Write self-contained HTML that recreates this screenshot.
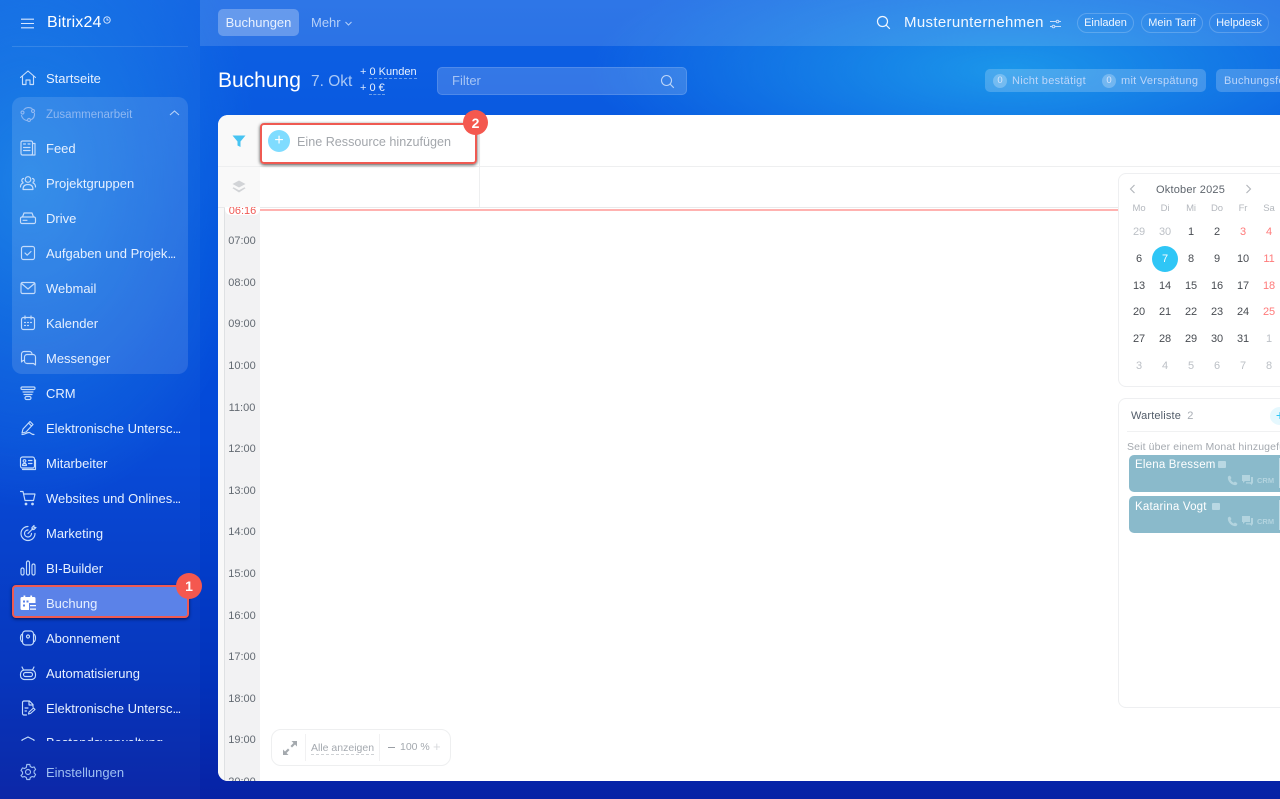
<!DOCTYPE html>
<html lang="de"><head><meta charset="utf-8"><title>Bitrix24 Buchung</title>
<style>
*{box-sizing:border-box;margin:0;padding:0}
html,body{width:1280px;height:799px;overflow:hidden}
body{position:relative;font-family:"Liberation Sans",sans-serif;color:#fff;
background:
radial-gradient(ellipse 420px 130px at 1010px 70px,#1b96ea 0%,rgba(27,150,234,0) 100%),
radial-gradient(ellipse 230px 330px at 30px 180px,#167de6 0%,rgba(22,125,230,0) 100%),
linear-gradient(180deg,#0f62e4 0%,#0350dc 30%,#0348d8 55%,#0232bb 85%,#0722a5 100%)}
.a{position:absolute;white-space:nowrap}
.side{position:absolute;left:0;top:0;width:200px;height:799px;background:rgba(255,255,255,.025)}
.top{position:absolute;left:200px;top:0;width:1080px;height:46px;background:rgba(255,255,255,.13)}
.group{position:absolute;left:12px;top:97px;width:176px;height:277px;border-radius:10px;background:rgba(255,255,255,.12)}
.it{position:absolute;left:46px;margin-top:1px;font-size:13px;line-height:18px;height:18px;color:#e6f0ff;white-space:nowrap}
.it i{font-style:normal;letter-spacing:-1px}
.ic{position:absolute;left:19px;width:18px;height:18px;fill:none;stroke:#c4dcfb;stroke-width:1.15;stroke-linecap:round;stroke-linejoin:round}
.main{position:absolute;left:218px;top:115px;width:1070px;height:666px;background:#fff;border-radius:10px 0 0 10px;overflow:hidden;color:#333}
.pill{position:absolute;top:13px;height:20px;border:1px solid rgba(255,255,255,.2);border-radius:10px;font-size:11px;line-height:18px;text-align:center;color:#f0f7ff}
.cal{position:absolute;font-size:11px;width:26px;text-align:center;line-height:14px;color:#484c52;letter-spacing:-.1px}
.g{color:#bcc0c6}.r{color:#ff7a7a}
.w{font-size:9.5px;color:#b4b8be}
.h{position:absolute;left:6px;width:36px;text-align:center;font-size:11px;line-height:14px;color:#636a72}
.card{position:absolute;left:911px;width:170px;height:37px;background:#8abacb;border-radius:5px;color:#fff}
</style></head><body>
<div class="side"></div><div class="top"></div>
<div class="a" style="left:12px;top:46px;width:176px;height:1px;background:rgba(255,255,255,.13)"></div>

<svg class="ic" style="left:21px;top:17px;width:13px;height:13px;stroke:#d8e8ff;stroke-width:1.1" viewBox="0 0 13 13"><path d="M0 2.200h13M0 6.500h13M0 10.800h13"/></svg>
<div class="a" style="left:47px;top:13px;font-size:16px;line-height:20px;letter-spacing:.15px">Bitrix24</div>
<svg class="a" style="left:103px;top:16px" width="8" height="8" viewBox="0 0 8 8" fill="none" stroke="#e4efff" stroke-width=".9"><circle cx="4" cy="4" r="3.200"/><path d="M4 2.200V4h1.600"/></svg>

<div class="group"></div>
<div class="it" style="top:69px">Startseite</div>
<div class="it" style="top:105px;font-size:11.500px;color:#8fb8f2">Zusammenarbeit</div>
<svg class="a" style="left:169px;top:110px" width="11" height="6" viewBox="0 0 11 6" fill="none" stroke="#b7d2f8" stroke-width="1.100"><path d="M1 5l4.500-4 4.500 4"/></svg>
<div class="it" style="top:139px">Feed</div>
<div class="it" style="top:174px">Projektgruppen</div>
<div class="it" style="top:209px">Drive</div>
<div class="it" style="top:244px">Aufgaben und Projek<i>...</i></div>
<div class="it" style="top:279px">Webmail</div>
<div class="it" style="top:314px">Kalender</div>
<div class="it" style="top:349px">Messenger</div>
<div class="it" style="top:384px">CRM</div>
<div class="it" style="top:419px">Elektronische Untersc<i>...</i></div>
<div class="it" style="top:454px">Mitarbeiter</div>
<div class="it" style="top:489px">Websites und Onlines<i>...</i></div>
<div class="it" style="top:524px">Marketing</div>
<div class="it" style="top:559px">BI-Builder</div>
<div class="a" style="left:12px;top:585px;width:177px;height:33px;background:#5b82e8;border:2px solid #ef5a52;border-radius:4px;box-shadow:0 1px 3px rgba(0,0,30,.7)"></div>
<div class="it" style="top:594px">Buchung</div>
<div class="it" style="top:629px">Abonnement</div>
<div class="it" style="top:664px">Automatisierung</div>
<div class="it" style="top:699px">Elektronische Untersc<i>...</i></div>
<div class="a" style="left:0;top:733px;width:200px;height:8px;overflow:hidden"><div class="it" style="top:0">Bestandsverwaltung</div>
<svg class="ic" style="top:1px" viewBox="0 0 18 18"><path d="M3 6l6-3 6 3v9H3z"/></svg></div>
<div class="it" style="top:763px;color:#9fc0f2">Einstellungen</div>

<svg class="ic" style="top:69px" viewBox="0 0 18 18"><path d="M1.500 8.500L9 2l7.500 6.500M3.500 7v8.500h3.500v-4.500h4v4.500h3.500V7"/></svg>
<svg class="ic" style="top:105px;stroke:#8fb8f2" viewBox="0 0 18 18"><path d="M5 4.500A6.500 6.500 0 0 1 13 3.500M15.500 8.500a6.500 6.500 0 0 1-3 6M8 15.500a6.500 6.500 0 0 1-5.500-5"/><circle cx="3.500" cy="7.500" r="1.500"/><circle cx="14" cy="6" r="1.500"/><circle cx="10" cy="15" r="1.500"/></svg>
<svg class="ic" style="top:139px" viewBox="0 0 18 18"><rect x="2" y="2" width="11.500" height="14" rx="1.500"/><path d="M13.500 4.500H16v11.500h-4M4.500 5h2M9 5h2M4.500 8.500h6.500M4.500 11.500h6.500"/></svg>
<svg class="ic" style="top:174px" viewBox="0 0 18 18"><circle cx="9" cy="5.500" r="2.800"/><path d="M4 15.500c0-3.500 2-5 5-5s5 1.500 5 5zM4.500 4.500a2 2 0 0 0-.500 3.800M1.500 13c0-2 1-3.500 2.500-4M13.500 4.500a2 2 0 0 1 .5 3.800M16.500 13c0-2-1-3.500-2.500-4"/></svg>
<svg class="ic" style="top:209px" viewBox="0 0 18 18"><path d="M3.500 8L5 4h8l1.500 4"/><rect x="1.500" y="8" width="15" height="6.500" rx="1.500"/><path d="M4 11.300h4"/></svg>
<svg class="ic" style="top:244px" viewBox="0 0 18 18"><rect x="2.500" y="2.500" width="13" height="13" rx="2"/><path d="M6 9l2.200 2.200L12 7.500"/></svg>
<svg class="ic" style="top:279px" viewBox="0 0 18 18"><rect x="2" y="3.500" width="14" height="11" rx="1.500"/><path d="M2.500 4.500L9 10l6.500-5.500"/></svg>
<svg class="ic" style="top:314px" viewBox="0 0 18 18"><rect x="2.500" y="3.500" width="13" height="12" rx="2"/><path d="M6 2v3M12 2v3M5.500 8.500h1M8.500 8.500h1M11.500 8.500h1M5.500 11.500h1M8.500 11.500h1"/></svg>
<svg class="ic" style="top:349px" viewBox="0 0 18 18"><path d="M5.500 11.500H4L2.500 13V5a2.500 2.500 0 0 1 2.500-2.500h5.500A2.500 2.500 0 0 1 13 5"/><path d="M8 5.500h6a2.500 2.500 0 0 1 2.500 2.500v8l-2-1.500H8a2.500 2.500 0 0 1-2.500-2.500V8A2.500 2.500 0 0 1 8 5.500z"/></svg>
<svg class="ic" style="top:384px" viewBox="0 0 18 18"><rect x="2" y="3" width="14" height="2.500" rx="1.200"/><path d="M4 8h10M5 10.500h8"/><rect x="6" y="12.500" width="6" height="3" rx="1.500"/></svg>
<svg class="ic" style="top:419px" viewBox="0 0 18 18"><path d="M3 14l1-4 7-7.500 3 3L7 13zM9.500 4l3 3M3 15.500c4 0 4-2 7-2 2 0 1.500 2 5 2"/></svg>
<svg class="ic" style="top:454px" viewBox="0 0 18 18"><rect x="1.500" y="3" width="14" height="11" rx="2"/><path d="M16.500 6v9.500h-13"/><circle cx="5.500" cy="7" r="1.300"/><path d="M3.500 11.500c0-1.500 1-2 2-2s2 .5 2 2zM9.500 6.500h3.500M9.500 9.500h3.500"/></svg>
<svg class="ic" style="top:489px" viewBox="0 0 18 18"><path d="M1.500 2.500h2.500l2 9h8.500l1.500-6.500H4.500"/><circle cx="7" cy="15" r=".8" fill="#c4dcfb"/><circle cx="13.500" cy="15" r=".8" fill="#c4dcfb"/></svg>
<svg class="ic" style="top:524px" viewBox="0 0 18 18"><path d="M9 2.500a7 7 0 1 0 7 7M9 6a3.500 3.500 0 1 0 3.500 3.500M9 9.500l5-5M13 3.500v2h2l2-2h-2v-2z"/></svg>
<svg class="ic" style="top:559px" viewBox="0 0 18 18"><rect x="2" y="9" width="3" height="7" rx="1.500"/><rect x="7.500" y="2" width="3" height="14" rx="1.500"/><rect x="13" y="5" width="3" height="11" rx="1.500"/></svg>
<svg class="ic" style="top:594px;stroke:none;fill:#fff" viewBox="0 0 18 18"><path d="M3 3h1.500V1.500h1.800V3h5V1.500h1.800V3H15a1.500 1.500 0 0 1 1.500 1.500V9H10v7H3a1.500 1.500 0 0 1-1.500-1.500v-10A1.500 1.500 0 0 1 3 3z"/><path d="M11 11h6v1.200h-6zM11 14.500h6v1.200h-6z"/><path fill="#5b82e8" d="M4 6.500h2v2H4zM7.500 6.500h2v2h-2zM4 10.500h2v2H4z"/></svg>
<svg class="ic" style="top:629px" viewBox="0 0 18 18"><rect x="3.500" y="2" width="11" height="14" rx="3"/><path d="M3.500 5C2 5.500 1.500 6.500 1.500 9s.5 3.500 2 4M14.500 5c1.500.5 2 1.500 2 4s-.5 3.500-2 4"/><circle cx="9" cy="7.500" r="1.500"/></svg>
<svg class="ic" style="top:664px" viewBox="0 0 18 18"><rect x="1.500" y="6" width="15" height="9.500" rx="4"/><path d="M4.500 6L3 3M13.500 6L15 3"/><rect x="4.500" y="8.500" width="9" height="4" rx="2"/></svg>
<svg class="ic" style="top:699px" viewBox="0 0 18 18"><path d="M7.500 16H5a1.500 1.500 0 0 1-1.500-1.500v-11A1.500 1.500 0 0 1 5 2h5.500L14 5.500V8M10 2v4h4M6 9h3M6 12h1.500M9.500 15l.5-2 4.500-4 1.500 1.500-4.500 4z"/></svg>
<svg class="ic" style="top:763px;stroke:#9fc0f2" viewBox="0 0 18 18"><circle cx="9" cy="9" r="2.500"/><path d="M7.500 2h3l.5 2 1.800 1 2-.6 1.500 2.600-1.500 1.500v2l1.500 1.500-1.500 2.600-2-.6-1.800 1-.5 2h-3l-.5-2-1.800-1-2 .6L1.700 13l1.500-1.500v-2L1.700 8l1.500-2.600 2 .6 1.800-1z" transform="translate(.3 -.5)"/></svg>

<!-- Top bar -->
<div class="a" style="left:218px;top:9px;width:81px;height:27px;border-radius:5px;background:rgba(255,255,255,.27);font-size:13px;line-height:28px;text-align:center;color:#e8f1ff">Buchungen</div>
<div class="a" style="left:311px;top:15px;font-size:13px;line-height:16px;color:#b5d0f8">Mehr</div>
<svg class="a" style="left:345px;top:21px" width="7" height="5" viewBox="0 0 7 5" fill="none" stroke="#b5d0f8"><path d="M.5 1l3 3 3-3"/></svg>
<svg class="a" style="left:876px;top:15px" width="15" height="15" viewBox="0 0 15 15" fill="none" stroke="#f0f6ff" stroke-width="1.200"><circle cx="6.500" cy="6.500" r="5"/><path d="M10 10l3.800 3.800"/></svg>
<div class="a" style="left:904px;top:14px;font-size:15px;line-height:18px;letter-spacing:.33px;color:#f2f8ff">Musterunternehmen</div>
<svg class="a" style="left:1050px;top:19px" width="11" height="10" viewBox="0 0 11 10" fill="none" stroke="#c4dcfb"><path d="M0 2.500h11M0 7.500h11"/><circle cx="7.500" cy="2.500" r="1.300" fill="#3a8fe8"/><circle cx="3.500" cy="7.500" r="1.300" fill="#3a8fe8"/></svg>
<div class="pill" style="left:1077px;width:57px">Einladen</div>
<div class="pill" style="left:1141px;width:62px">Mein Tarif</div>
<div class="pill" style="left:1209px;width:60px">Helpdesk</div>

<!-- Title -->
<div class="a" style="left:218px;top:68px;font-size:21px;line-height:26px">Buchung</div>
<div class="a" style="left:311px;top:71px;font-size:15.500px;line-height:22px;color:#a9c8f6">7. Okt</div>
<div class="a" style="left:360px;top:65px;font-size:11px;line-height:14px;color:#d6e6ff">+ <span style="border-bottom:1px dashed #6c9fe8;color:#e9f2ff">0 Kunden</span></div>
<div class="a" style="left:360px;top:81px;font-size:11px;line-height:14px;color:#d6e6ff">+ <span style="border-bottom:1px dashed #6c9fe8;color:#e9f2ff">0 €</span></div>
<div class="a" style="left:437px;top:67px;width:250px;height:28px;border-radius:5px;background:rgba(255,255,255,.17);border:1px solid rgba(255,255,255,.14);font-size:13px;line-height:26px;padding-left:14px;color:#a5c4f5">Filter</div>
<svg class="a" style="left:660px;top:74px" width="15" height="15" viewBox="0 0 15 15" fill="none" stroke="#bcd5f8" stroke-width="1.100"><circle cx="6.500" cy="6.500" r="5"/><path d="M10 10l3.800 3.800"/></svg>
<div class="a" style="left:985px;top:69px;width:221px;height:23px;border-radius:5px;background:rgba(255,255,255,.2)"></div>
<div class="a" style="left:993px;top:74px;width:14px;height:14px;border-radius:50%;background:rgba(255,255,255,.25);font-size:9.500px;line-height:14px;text-align:center;color:#d6e6ff">0</div>
<div class="a" style="left:1012px;top:74px;font-size:11px;line-height:14px;color:#bdd6fa;letter-spacing:.28px">Nicht bestätigt</div>
<div class="a" style="left:1102px;top:74px;width:14px;height:14px;border-radius:50%;background:rgba(255,255,255,.25);font-size:9.500px;line-height:14px;text-align:center;color:#d6e6ff">0</div>
<div class="a" style="left:1121px;top:74px;font-size:11px;line-height:14px;color:#bdd6fa;letter-spacing:.28px">mit Verspätung</div>
<div class="a" style="left:1216px;top:69px;width:80px;height:23px;border-radius:5px;background:rgba(255,255,255,.2);font-size:11px;line-height:25px;padding-left:8px;color:#bdd6fa;letter-spacing:.28px">Buchungsformular</div>

<!-- Main panel -->
<div class="main">
<div class="a" style="left:0;top:92px;width:6px;height:574px;background:#f9f9f9"></div>
<div class="a" style="left:6px;top:92px;width:36px;height:574px;background:#f2f2f3"></div>
<div class="a" style="left:0;top:0;width:42px;height:92px;background:#f9f9f9"></div>
<div class="a" style="left:6px;top:92px;width:1px;height:574px;background:#dfe1e3"></div>
<div class="a" style="left:0;top:51px;width:1070px;height:1px;background:#eeeff0"></div>
<div class="a" style="left:0;top:92px;width:1070px;height:1px;background:#e9eaeb"></div>
<div class="a" style="left:261px;top:0;width:1px;height:92px;background:#eeeff0"></div>
<svg class="a" style="left:14px;top:19px" width="14" height="14" viewBox="0 0 14 14" fill="#47c4f2"><path d="M.5 1.500h13L8.500 7.500v5.500l-3-1.500v-4z"/></svg>
<svg class="a" style="left:14px;top:65px" width="14" height="14" viewBox="0 0 14 14" fill="#d2d4d7"><path d="M7 .5l6.500 3.500L7 7.500.5 4z"/><path d="M1.500 7.300L7 10.300l5.500-3 1 1L7 12.500.5 8.300z"/></svg>

<div class="a" style="left:42px;top:94px;width:858px;height:2px;background:#ffb2b0"></div>
<div class="a" style="left:7px;top:92px;width:35px;height:8px;background:#fff;border-radius:0 0 6px 6px;overflow:hidden"><div class="a" style="left:0;top:-2px;width:35px;text-align:center;font-size:11px;line-height:13px;color:#f05a55">06:16</div></div>
<div class="h" style="top:119px">07:00</div>
<div class="h" style="top:161px">08:00</div>
<div class="h" style="top:202px">09:00</div>
<div class="h" style="top:244px">10:00</div>
<div class="h" style="top:286px">11:00</div>
<div class="h" style="top:327px">12:00</div>
<div class="h" style="top:369px">13:00</div>
<div class="h" style="top:410px">14:00</div>
<div class="h" style="top:452px">15:00</div>
<div class="h" style="top:494px">16:00</div>
<div class="h" style="top:535px">17:00</div>
<div class="h" style="top:577px">18:00</div>
<div class="h" style="top:618px">19:00</div>
<div class="h" style="top:660px">20:00</div>

<!-- Add resource -->
<div class="a" style="left:41.500px;top:8px;width:217px;height:41px;border:2px solid #ef5a52;border-radius:4px;box-shadow:0 1px 3px rgba(0,0,0,.7)"></div>
<div class="a" style="left:50px;top:15px;width:22px;height:22px;border-radius:50%;background:#7fdcff;color:#fff;text-align:center;font-size:16px;line-height:21px">+</div>
<div class="a" style="left:79px;top:18.500px;font-size:12.600px;line-height:16px;color:#a3a7ac">Eine Ressource hinzufügen</div>

<!-- Calendar -->
<div class="a" style="left:900px;top:58px;width:180px;height:214px;border:1px solid #eeeff1;border-radius:8px;background:#fff"></div>
<svg class="a" style="left:911px;top:69px" width="7" height="10" viewBox="0 0 7 10" fill="none" stroke="#b0b4b9" stroke-width="1.100"><path d="M5.500 1l-4 4 4 4"/></svg>
<svg class="a" style="left:1027px;top:69px" width="7" height="10" viewBox="0 0 7 10" fill="none" stroke="#b0b4b9" stroke-width="1.100"><path d="M1.500 1l4 4-4 4"/></svg>
<div class="a" style="left:938px;top:67px;margin-top:1px;font-size:11px;line-height:14px;color:#5f666e;letter-spacing:.2px">Oktober 2025</div>
<div class="cal w" style="left:908px;top:87px">Mo</div><div class="cal w" style="left:934px;top:87px">Di</div><div class="cal w" style="left:960px;top:87px">Mi</div><div class="cal w" style="left:986px;top:87px">Do</div><div class="cal w" style="left:1012px;top:87px">Fr</div><div class="cal w" style="left:1038px;top:87px">Sa</div>
<div class="cal g" style="left:908px;top:110px">29</div><div class="cal g" style="left:934px;top:110px">30</div><div class="cal" style="left:960px;top:110px">1</div><div class="cal" style="left:986px;top:110px">2</div><div class="cal r" style="left:1012px;top:110px">3</div><div class="cal r" style="left:1038px;top:110px">4</div>
<div class="a" style="left:934px;top:131px;width:26px;height:26px;border-radius:50%;background:#2fc6f6"></div>
<div class="cal" style="left:908px;top:137px">6</div><div class="cal" style="left:934px;top:137px;color:#fff">7</div><div class="cal" style="left:960px;top:137px">8</div><div class="cal" style="left:986px;top:137px">9</div><div class="cal" style="left:1012px;top:137px">10</div><div class="cal r" style="left:1038px;top:137px">11</div>
<div class="cal" style="left:908px;top:164px">13</div><div class="cal" style="left:934px;top:164px">14</div><div class="cal" style="left:960px;top:164px">15</div><div class="cal" style="left:986px;top:164px">16</div><div class="cal" style="left:1012px;top:164px">17</div><div class="cal r" style="left:1038px;top:164px">18</div>
<div class="cal" style="left:908px;top:190px">20</div><div class="cal" style="left:934px;top:190px">21</div><div class="cal" style="left:960px;top:190px">22</div><div class="cal" style="left:986px;top:190px">23</div><div class="cal" style="left:1012px;top:190px">24</div><div class="cal r" style="left:1038px;top:190px">25</div>
<div class="cal" style="left:908px;top:217px">27</div><div class="cal" style="left:934px;top:217px">28</div><div class="cal" style="left:960px;top:217px">29</div><div class="cal" style="left:986px;top:217px">30</div><div class="cal" style="left:1012px;top:217px">31</div><div class="cal g" style="left:1038px;top:217px">1</div>
<div class="cal g" style="left:908px;top:244px">3</div><div class="cal g" style="left:934px;top:244px">4</div><div class="cal g" style="left:960px;top:244px">5</div><div class="cal g" style="left:986px;top:244px">6</div><div class="cal g" style="left:1012px;top:244px">7</div><div class="cal g" style="left:1038px;top:244px">8</div>

<!-- Waitlist -->
<div class="a" style="left:900px;top:283px;width:180px;height:310px;border:1px solid #eeeff1;border-radius:8px;background:#fff"></div>
<div class="a" style="left:913px;top:294px;font-size:11px;line-height:14px;color:#525c69;letter-spacing:.15px">Warteliste <span style="color:#a8adb4;margin-left:3px">2</span></div>
<div class="a" style="left:1052px;top:292px;width:20px;height:18px;border-radius:50%;background:#e5f8fe;color:#2fc6f6;font-size:14px;line-height:17px;text-align:center">+</div>
<div class="a" style="left:909px;top:316px;width:160px;height:1px;background:#f0f1f2"></div>
<div class="a" style="left:909px;top:325px;font-size:10.500px;line-height:14px;color:#a4a9af;letter-spacing:.13px">Seit über einem Monat hinzugefügt</div>
<div class="card" style="top:340px"><div class="a" style="left:6px;top:3px;font-size:11.500px;line-height:14px;letter-spacing:.2px">Elena Bressem</div></div>
<div class="card" style="top:381px"><div class="a" style="left:6px;top:4px;font-size:11.500px;line-height:14px;letter-spacing:.2px">Katarina Vogt</div></div>
<div class="a" style="left:1061px;top:343px;width:1px;height:30px;background:#c3dde6"></div>
<div class="a" style="left:1061px;top:385px;width:1px;height:30px;background:#c3dde6"></div>
<svg class="a" style="left:1000px;top:346px" width="8" height="7" viewBox="0 0 8 7" fill="#b9d8e3"><path d="M1 0h6a1 1 0 0 1 1 1v5a1 1 0 0 1-1 1H1a1 1 0 0 1-1-1V1a1 1 0 0 1 1-1z"/></svg>
<svg class="a" style="left:994px;top:388px" width="8" height="7" viewBox="0 0 8 7" fill="#b9d8e3"><path d="M1 0h6a1 1 0 0 1 1 1v5a1 1 0 0 1-1 1H1a1 1 0 0 1-1-1V1a1 1 0 0 1 1-1z"/></svg>
<svg class="a" style="left:1009px;top:360px" width="11" height="11" viewBox="0 0 11 11" fill="#b3d4df"><path d="M1 1.500L3 .5l1.500 2.500-1 1.200c.6 1.400 1.800 2.700 3.300 3.300l1.200-1 2.500 1.500-1 2C5 11 0 6 1 1.500z"/></svg>
<svg class="a" style="left:1024px;top:360px" width="11" height="10" viewBox="0 0 11 10" fill="#b3d4df"><path d="M0 0h8v6H3L1 8V6H0z"/><path d="M9 2h2v6.500h-1V10L8 8.500H4V7.200h5z"/></svg>
<svg class="a" style="left:1009px;top:401px" width="11" height="11" viewBox="0 0 11 11" fill="#b3d4df"><path d="M1 1.500L3 .5l1.500 2.500-1 1.200c.6 1.400 1.800 2.700 3.300 3.300l1.200-1 2.500 1.500-1 2C5 11 0 6 1 1.500z"/></svg>
<svg class="a" style="left:1024px;top:401px" width="11" height="10" viewBox="0 0 11 10" fill="#b3d4df"><path d="M0 0h8v6H3L1 8V6H0z"/><path d="M9 2h2v6.500h-1V10L8 8.500H4V7.200h5z"/></svg>
<div class="a" style="left:1039px;top:361px;font-size:7.500px;font-weight:bold;line-height:9px;color:#b3d4df">CRM</div>
<div class="a" style="left:1039px;top:402px;font-size:7.500px;font-weight:bold;line-height:9px;color:#b3d4df">CRM</div>

<!-- Zoom control -->
<div class="a" style="left:53px;top:614px;width:180px;height:37px;border:1px solid #eeeff0;border-radius:10px;background:#fff"></div>
<svg class="a" style="left:65px;top:626px" width="14" height="14" viewBox="0 0 14 14" fill="#a4a9ae"><path d="M8.500 0H14v5.500L12 3.500 9 6.500 7.500 5l3-3zM0 8.500V14h5.500L3.500 12l3-3L5 7.500l-3 3z"/></svg>
<div class="a" style="left:87px;top:619px;width:1px;height:27px;background:#f1f1f2"></div>
<div class="a" style="left:93px;top:627px;font-size:10.500px;line-height:12px;color:#a4a9af;border-bottom:1px dashed #cfd2d5">Alle anzeigen</div>
<div class="a" style="left:161px;top:619px;width:1px;height:27px;background:#f1f1f2"></div>
<div class="a" style="left:170px;top:632px;width:7px;height:1px;background:#9a9fa5"></div>
<div class="a" style="left:182px;top:626px;font-size:10.500px;line-height:13px;color:#a4a9af">100 %</div>
<div class="a" style="left:215px;top:624px;font-size:13px;line-height:16px;color:#d8dadd">+</div>
</div>

<!-- Badges -->
<div class="a" style="left:176px;top:573px;width:26px;height:26px;border-radius:50%;background:#f4584f;color:#fff;font-size:14px;font-weight:bold;line-height:27px;text-align:center">1</div>
<div class="a" style="left:463px;top:110px;width:25px;height:25px;border-radius:50%;background:#f4584f;color:#fff;font-size:14px;font-weight:bold;line-height:26px;text-align:center">2</div>
</body></html>
